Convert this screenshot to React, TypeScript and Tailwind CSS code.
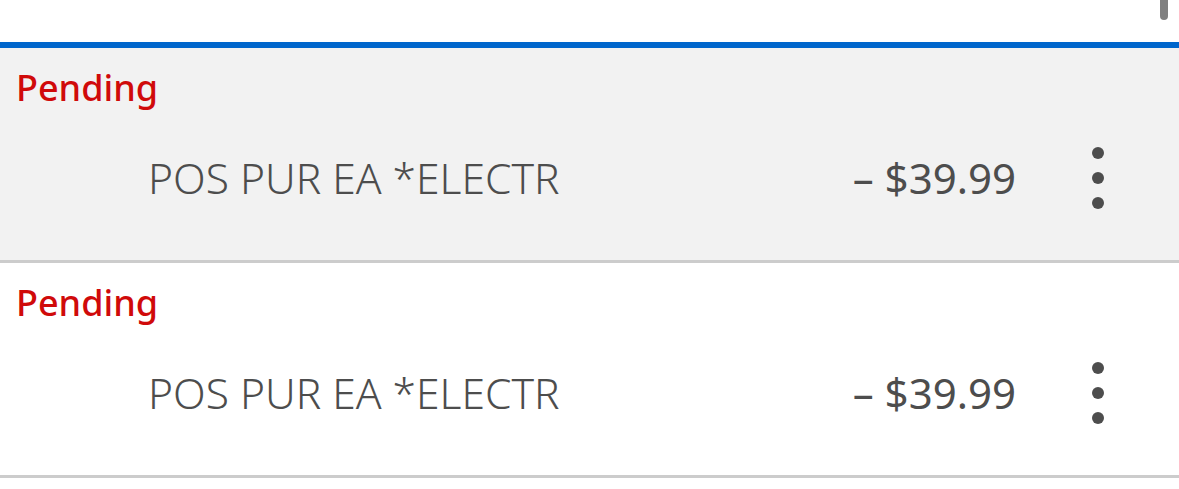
const rows = [
  { status: 'Pending', desc: 'POS PUR EA *ELECTR', amount: '– $39.99', shaded: true },
  { status: 'Pending', desc: 'POS PUR EA *ELECTR', amount: '– $39.99', shaded: false },
];

function Kebab() {
  return (
    <svg width="12" height="62" viewBox="0 0 12 62" className="shrink-0 fill-[#4d4d4d]">
      <circle cx="6" cy="6" r="6" />
      <circle cx="6" cy="31" r="6" />
      <circle cx="6" cy="56" r="6" />
    </svg>
  );
}

export default function App() {
  return (
    <div className="relative w-[1179px] h-[489px] bg-white overflow-hidden" style={{ fontFamily: '"Noto Sans", "Open Sans", sans-serif' }}>
      <div className="absolute top-0 left-[1160px] w-[8px] h-[20px] bg-[#808080] rounded-b-full" />
      <div className="h-[42px]" />
      <div className="h-[6px] bg-[#0066cc]" />
      {rows.map((r, i) => (
        <div key={i} className={`${r.shaded ? 'bg-[#f2f2f2]' : 'bg-white'} border-b-[3px] border-[#cccccc] pt-4 pb-[54px]`}>
          <div className="pl-4 text-[36px] leading-[48px] font-medium text-[#d00a0a]">{r.status}</div>
          <div className="flex items-center mt-[38px] h-[56px]">
            <div className="flex-1 pl-[148px] text-[42.5px] leading-[56px] font-light text-[#4d4d4d]">{r.desc}</div>
            <div className="text-[42px] leading-[56px] font-normal text-[#4d4d4d]">{r.amount}</div>
            <div className="ml-[76px] mr-[75px] flex items-center">
              <Kebab />
            </div>
          </div>
        </div>
      ))}
    </div>
  );
}
